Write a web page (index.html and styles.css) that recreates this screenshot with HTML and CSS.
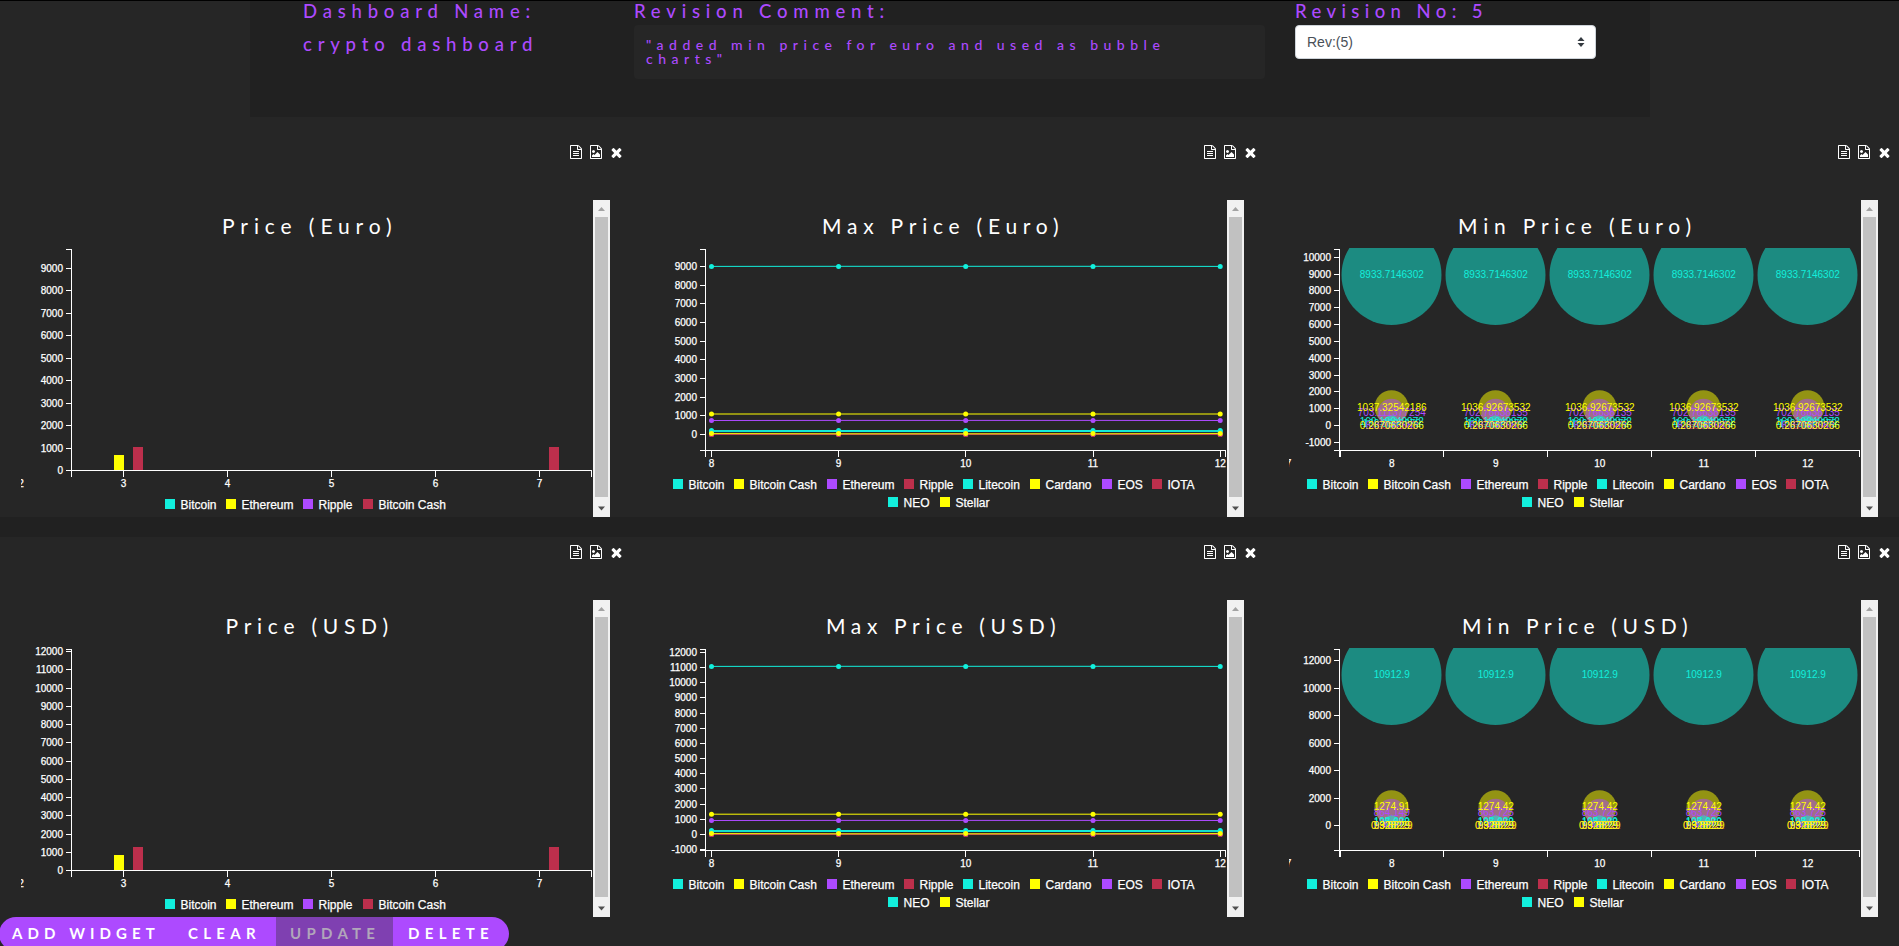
FILE: index.html
```html
<!DOCTYPE html>
<html lang="en">
<head>
<meta charset="utf-8">
<title>crypto dashboard</title>
<link rel="stylesheet" href="styles.css">
</head>
<body>
<svg class="sprite" width="0" height="0">
  <symbol id="i-text" viewBox="0 0 1792 1792"><path d="M1596 380q28 28 48 76t20 88v1152q0 40-28 68t-68 28h-1344q-40 0-68-28t-28-68v-1600q0-40 28-68t68-28h896q40 0 88 20t76 48zm-444-244v376h376q-10-29-22-41l-313-313q-12-12-41-22zm384 1528v-1024h-416q-40 0-68-28t-28-68v-416h-768v1536h1280zm-1024-864q0-14 9-23t23-9h704q14 0 23 9t9 23v64q0 14-9 23t-23 9h-704q-14 0-23-9t-9-23v-64zm736 224q14 0 23 9t9 23v64q0 14-9 23t-23 9h-704q-14 0-23-9t-9-23v-64q0-14 9-23t23-9h704zm0 256q14 0 23 9t9 23v64q0 14-9 23t-23 9h-704q-14 0-23-9t-9-23v-64q0-14 9-23t23-9h704z"/></symbol>
  <symbol id="i-image" viewBox="0 0 1792 1792"><path d="M1596 380q28 28 48 76t20 88v1152q0 40-28 68t-68 28h-1344q-40 0-68-28t-28-68v-1600q0-40 28-68t68-28h896q40 0 88 20t76 48zm-444-244v376h376q-10-29-22-41l-313-313q-12-12-41-22zm384 1528v-1024h-416q-40 0-68-28t-28-68v-416h-768v1536h1280zm-128-448v320h-1024v-192l192-192 128 128 384-384zm-832-192q-80 0-136-56t-56-136 56-136 136-56 136 56 56 136-56 136-136 56z"/></symbol>
  <symbol id="i-times" viewBox="0 0 1792 1792"><path d="M1490 1322q0 40-28 68l-136 136q-28 28-68 28t-68-28l-294-294-294 294q-28 28-68 28t-68-28l-136-136q-28-28-28-68t28-68l294-294-294-294q-28-28-28-68t28-68l136-136q28-28 68-28t68 28l294 294 294-294q28-28 68-28t68 28l136 136q28 28 28 68t-28 68l-294 294 294 294q28 28 28 68z"/></symbol>
</svg>

<header class="info">
  <div class="info-name">
    <h2 class="label label-name">Dashboard Name:</h2>
    <p class="name">crypto dashboard</p>
  </div>
  <div class="info-comment">
    <h2 class="label label-comment">Revision Comment:</h2>
    <p class="comment">"added min price for euro and used as bubble<br>charts"</p>
  </div>
  <div class="info-rev">
    <h2 class="label label-rev">Revision No: 5</h2>
    <div class="select"><span>Rev:(5)</span>
      <svg class="caret" width="8" height="10" viewBox="0 0 8 10"><path d="M0.5 4 4 0 7.5 4zM0.5 6 4 10 7.5 6z"/></svg>
    </div>
  </div>
</header>

<main class="grid" id="grid"></main>

<footer class="actions">
  <button class="btn btn-add">ADD WIDGET</button>
  <button class="btn btn-clear">CLEAR</button>
  <button class="btn btn-update" disabled>UPDATE</button>
  <button class="btn btn-delete">DELETE</button>
</footer>
<script src="charts.js"></script>
</body>
</html>
```

FILE: styles.css
```css
* { box-sizing: border-box; }
html, body { height: 100%; }
body {
  margin: 0;
  overflow: hidden;
  background: #262626;
  border-top: 1px solid #000;
  font-family: "Liberation Sans", Arial, sans-serif;
}
.sprite { position: absolute; }

.info {
  display: grid;
  grid-template-columns: 331px 661px 302px;
  width: 1400px;
  height: 116px;
  margin-left: 250px;
  padding-left: 53px;
  background: #212121;
}
.label, .name {
  margin: 0;
  height: 24px;
  font: 500 18.5px/20px Lato, sans-serif;
  color: #ad4aff;
  white-space: nowrap;
}
.label-name { letter-spacing: 5.8px; }
.label-comment { letter-spacing: 5.8px; }
.label-rev { letter-spacing: 5.4px; }
.name { margin-top: 9px; letter-spacing: 5.8px; }
.comment {
  width: 631px;
  height: 54px;
  margin: 0;
  padding: 13px 12px;
  border-radius: 4px;
  background: #262626;
  color: #ad4aff;
  font: 500 14px/14px Lato, sans-serif;
  letter-spacing: 5.5px;
  white-space: nowrap;
}
.select {
  display: flex;
  align-items: center;
  justify-content: space-between;
  width: 301px;
  height: 34px;
  padding: 0 10px 0 11px;
  border: 1px solid #ced4da;
  border-radius: 4px;
  background: #fff;
  color: #495057;
  font-size: 14px;
}
.caret { fill: #343a40; }

.grid {
  display: grid;
  grid-template-columns: repeat(3, 634px);
  grid-template-rows: 400px 380px;
  row-gap: 20px;
  background: #212121;
}
.card { background: #262626; display: flex; flex-direction: column; justify-content: flex-end; }
.card-tools {
  display: flex;
  gap: 6px;
  justify-content: flex-end;
  padding-right: 10px;
  height: 55.500px;
}
.icon { width: 14px; height: 14px; fill: #fff; }
.icon-x { width: 15px; height: 15px; }
.card-body {
  display: flex;
  height: 317px;
  padding-left: 21px;
}
.chart { display: block; width: 572px; height: 317px; }
.scrollbar {
  display: flex;
  flex-direction: column;
  align-items: center;
  justify-content: space-between;
  width: 17px;
  height: 317px;
  background: #f1f1f1;
}
.arrow { flex: none; width: 17px; height: 17px; }
.arrow-up { fill: #a3a3a3; }
.arrow-down { fill: #505050; }
.thumb { width: 13px; height: 280px; margin-bottom: 3px; background: #c1c1c1; }

.axis { fill: none; stroke: #fff; shape-rendering: crispEdges; }
.tick, .legend, .value { font-family: "Liberation Sans", Arial, sans-serif; fill: #fff; }
.tick, .value { font-size: 10px; }
.tick, .legend { stroke: #fff; stroke-width: 0.25px; }
.legend { font-size: 12px; }
.title { font: 400 21px Lato, sans-serif; fill: #fff; }

.actions {
  display: flex;
  width: 510px;
  height: 34px;
  margin-left: -1px;
  border-radius: 17px;
  overflow: hidden;
}
.btn {
  border: 0;
  padding: 0 0 2px 0;
  background: #ad4aff;
  color: #fff;
  font: 700 15px/30px Lato, sans-serif;
  letter-spacing: 5.3px;
  text-align: left;
  white-space: nowrap;
}
.btn-add { width: 176px; padding-left: 13px; letter-spacing: 5.1px; }
.btn-clear { width: 101px; padding-left: 13px; }
.btn-update { width: 117px; padding-left: 14px; background: #7f40b1; color: #b1a6ba; }
.btn-delete { width: 116px; padding-left: 15px; }
```

FILE: charts.js
```js
const C = { cyan: '#12efdc', yellow: '#ffff00', purple: '#ad4aff', red: '#bc2f4c' };
const PALETTE = [C.cyan, C.yellow, C.purple, C.red];

// Chart frame, in page units relative to the card (x) and to the first row (y).
const LEFT = 71.5, RIGHT = 591.5, TOP = 249.5;

const text = (cls, x, y, s, extra = '') => `<text class="${cls}" x="${x}" y="${y}" ${extra}>${s}</text>`;

function title(t) {
  return text('title', t.x, 234, t.s, `textLength="${t.w}" lengthAdjust="spacing"`);
}

function yAxis(base, zero, step, inc, from, to) {
  let d = `M${LEFT - 6} ${TOP}H${LEFT}V${base}H${LEFT - 6}`, labels = '';
  for (let v = from; v <= to; v += inc) {
    const y = Math.round(zero - (v / inc) * step - 0.5) + 0.5;
    d += `M${LEFT - 6} ${y}H${LEFT}`;
    labels += text('tick', LEFT - 8.5, y + 3.5, v, 'text-anchor="end"');
  }
  return `<path class="axis" d="${d}"/>` + labels;
}

function xAxis(base, ticks, labels) {
  let d = `M${LEFT} ${base + 6}V${base}H${RIGHT}V${base + 6}`;
  ticks.forEach(x => { d += `M${x} ${base}V${base + 6}`; });
  return `<path class="axis" d="${d}"/>` +
    labels.map(([x, s]) => text('tick', x, base + 16.5, s, 'text-anchor="middle"')).join('');
}

function legend(rows) {
  return rows.map(r => r.items.map(([x, s, c]) =>
    `<rect x="${x}" y="${r.y}" width="10" height="10" fill="${c}"/>` +
    text('legend', x + 15.5, r.y + 10, s)).join('')).join('');
}

const LONG = [
  { y: 479, items: [[39, 'Bitcoin'], [100, 'Bitcoin Cash'], [193, 'Ethereum'], [270, 'Ripple'], [329, 'Litecoin'],
    [396, 'Cardano'], [468, 'EOS'], [518, 'IOTA']].map((a, i) => [...a, PALETTE[i % 4]]) },
  { y: 497, items: [[254, 'NEO', C.cyan], [306, 'Stellar', C.yellow]] }
];
const SHORT = [{ y: 499, items: [[165, 'Bitcoin', C.cyan], [226, 'Ethereum', C.yellow],
  [303, 'Ripple', C.purple], [363, 'Bitcoin Cash', C.red]] }];

function barChart(c) {
  const xs = [3, 4, 5, 6, 7].map((n, i) => [123.5 + 104 * i, n]);
  const bars = [[114, 455, C.yellow], [133, 447, C.red], [549, 447, C.red]]
    .map(([x, y, f]) => `<rect x="${x}" y="${y}" width="10" height="${470 - y}" fill="${f}"/>`).join('');
  return bars + yAxis(470.5, 470.5, c.step, 1000, 0, c.max) +
    xAxis(470.5, xs.map(x => x[0]), [[21, 2], ...xs]) + legend(SHORT);
}

function lineChart(c) {
  const xs = [77.5, 204.6, 331.7, 459, 586.2];
  const series = [[266.4, 266.3, C.cyan], [434.4, 434.4, C.red], [434.5, 434.5, C.purple], [434.4, 434.4, C.red],
    [c.cash, c.cash, C.yellow], [420.5, 420.4, C.purple], [430.6, 430.5, C.cyan], [431.6, 431.5, C.cyan], [433.6, 433.8, C.yellow]];
  const lines = series.map(([a, b, s]) =>
    `<polyline fill="none" stroke="${s}" points="${xs.map((x, i) => `${x},${i % 4 ? b : a}`).join(' ')}"/>`).join('');
  const dots = series.map(([a, b, s]) => xs.map(x => `<circle cx="${x}" cy="${a}" r="2.5" fill="${s}"/>`).join('')).join('');
  return yAxis(450.5, 434.5, c.step, 1000, c.min, c.max) +
    xAxis(450.5, xs.map(x => Math.floor(x) + 0.5), xs.map((x, i) => [x, 8 + i])) + lines + dots + legend(LONG);
}

function bubbleChart(c, id) {
  const xs = [0, 1, 2, 3, 4].map(i => 123.5 + 104 * i);
  let out = `<clipPath id="${id}"><rect x="71" y="248" width="521" height="203"/></clipPath>`;
  const blobs = [[275, 50, C.cyan], [407.2, 17, C.yellow], [412.8, 14, C.purple], [422.2, 7, C.cyan], [424.5, 3, C.cyan]];
  out += `<g clip-path="url(#${id})">` + blobs.map(([y, r, f]) =>
    xs.map(x => `<circle cx="${x}" cy="${y}" r="${r}" fill="${f}" opacity="0.5"/>`).join('')).join('') + '</g>';
  xs.forEach((x, i) => {
    (i ? c.values : c.first).forEach(([y, s, f]) => {
      out += text('value', x + 0.3, y, s, `text-anchor="middle" style="fill:${f}"`);
    });
  });
  return out + yAxis(450.5, 425.5, c.step, c.inc, c.min, c.max) +
    xAxis(450.5, [72.5, 175.5, 279.5, 383.5, 487.5], [[20.5, 7], ...xs.map((x, i) => [x + 0.3, 8 + i])]) + legend(LONG);
}

const euroTail = [[424.5, '160.19640972', C.cyan], [426.5, '160.8096972', C.cyan],
  [428.5, '0.6951046', C.red], [428.5, '6.87042683', C.purple], [428.5, '0.2670630266', C.yellow]];
const usdTail = [[424.5, '195.629', C.cyan], [426, '197.088', C.cyan],
  [428.5, '0.846271', C.red], [428.5, '8.42913', C.purple], [428.5, '99.8829', C.yellow], [428.5, '0.328229', C.yellow]];

const WIDGETS = [
  { title: { s: 'Price (Euro)', x: 222, w: 169.5 }, draw: () => barChart({ step: 22.44, max: 9000 }) },
  { title: { s: 'Max Price (Euro)', x: 188, w: 236.5 }, draw: () => lineChart({ step: 18.68, min: 0, max: 9000, cash: 414 }) },
  { title: { s: 'Min Price (Euro)', x: 190, w: 233 }, draw: () => bubbleChart({ step: 16.83, inc: 1000, min: -1000, max: 10000,
    first: [[278, '8933.7146302', C.cyan], [416, '703.111377254', C.purple], ...euroTail, [411.3, '1037.32542186', C.yellow]],
    values: [[278, '8933.7146302', C.cyan], [416, '702.76638135', C.purple], ...euroTail, [411.3, '1036.92673532', C.yellow]] }, 'c3') },
  { title: { s: 'Price (USD)', x: 225.5, w: 162.5 }, draw: () => barChart({ step: 18.23, max: 12000 }) },
  { title: { s: 'Max Price (USD)', x: 192, w: 229.5 }, draw: () => lineChart({ step: 15.17, min: -1000, max: 12000, cash: 414.2 }) },
  { title: { s: 'Min Price (USD)', x: 194, w: 225.5 }, draw: () => bubbleChart({ step: 27.5, inc: 2000, min: 0, max: 12000,
    first: [[278, '10912.9', C.cyan], [416, '864.149', C.purple], ...usdTail, [410.3, '1274.91', C.yellow]],
    values: [[278, '10912.9', C.cyan], [416, '863.725', C.purple], ...usdTail, [410.3, '1274.42', C.yellow]] }, 'c6') }
];

document.getElementById('grid').innerHTML = WIDGETS.map(w => `
  <section class="card">
    <div class="card-tools">
      <svg class="icon"><use href="#i-text"/></svg>
      <svg class="icon"><use href="#i-image"/></svg>
      <svg class="icon icon-x"><use href="#i-times"/></svg>
    </div>
    <div class="card-body">
      <svg class="chart" viewBox="21 200 572 317">${title(w.title)}${w.draw()}</svg>
      <div class="scrollbar">
        <svg class="arrow arrow-up" viewBox="0 0 17 17"><path d="M5 11 8.5 7 12 11z"/></svg>
        <div class="thumb"></div>
        <svg class="arrow arrow-down" viewBox="0 0 17 17"><path d="M5 6.500 8.500 10.500 12 6.500z"/></svg>
      </div>
    </div>
  </section>`).join('');
```
